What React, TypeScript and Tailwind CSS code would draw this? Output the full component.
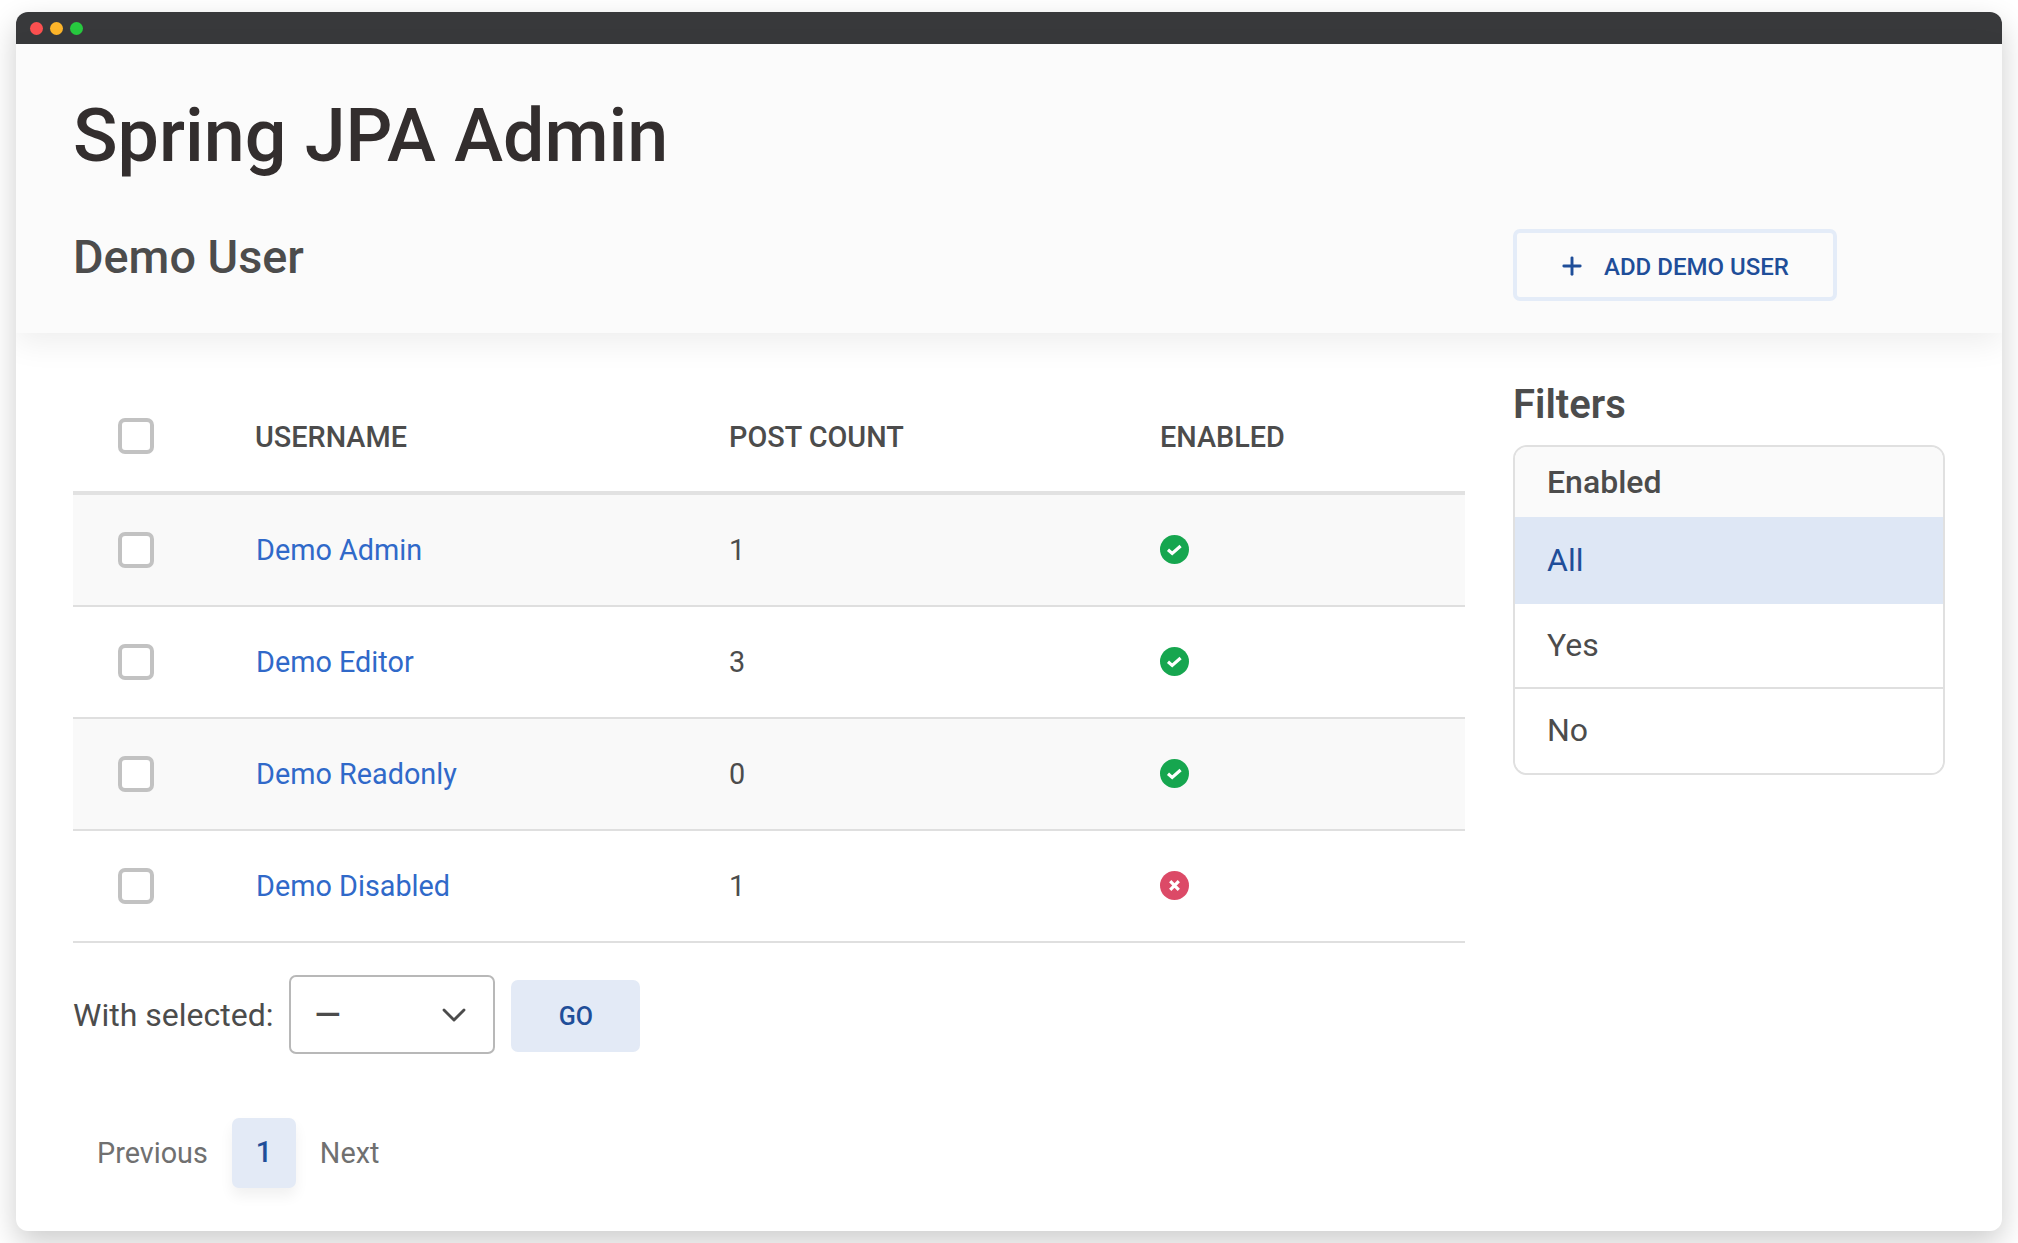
import { Plus, ChevronDown } from 'lucide-react';

const rows = [
  { name: 'Demo Admin', posts: 1, enabled: true },
  { name: 'Demo Editor', posts: 3, enabled: true },
  { name: 'Demo Readonly', posts: 0, enabled: true },
  { name: 'Demo Disabled', posts: 1, enabled: false },
];

function Checkbox() {
  return <span className="block h-[36px] w-[36px] rounded-[7px] border-[4px] border-[#c2c2c2] bg-white" />;
}

function StatusIcon({ on }: { on: boolean }) {
  return (
    <svg className="mb-[2px]" width="29" height="29" viewBox="0 0 29 29">
      <circle cx="14.5" cy="14.5" r="14.5" fill={on ? '#16a64f' : '#dc4a67'} />
      {on ? (
        <path d="M8 14.8l4.2 3.6 8.4-7.4" fill="none" stroke="#fff" strokeWidth="3.2" />
      ) : (
        <path d="M10.2 10.2l8.6 8.6M18.8 10.2l-8.6 8.6" fill="none" stroke="#fff" strokeWidth="3.2" />
      )}
    </svg>
  );
}

export default function App() {
  return (
    <div className="min-h-[1243px] bg-white pt-[12px] pl-[16px] pr-[16px] font-['Roboto',sans-serif] text-[#4c4c4c]">
      <div className="h-[1219px] w-[1986px] overflow-hidden rounded-[12px] bg-white shadow-[0_12px_30px_rgba(0,0,0,0.2)]">
        {/* title bar */}
        <div className="flex h-[32px] items-center gap-[7px] bg-[#38393b] pl-[14px]">
          <span className="h-[13px] w-[13px] rounded-full bg-[#fc5050]" />
          <span className="h-[13px] w-[13px] rounded-full bg-[#fdb52a]" />
          <span className="h-[13px] w-[13px] rounded-full bg-[#27c93f]" />
        </div>

        {/* header */}
        <header className="relative h-[289px] bg-[#fbfbfb] pl-[57px] shadow-[0_10px_30px_rgba(0,0,0,0.07)]">
          <h1 className="pt-[46px] text-[73.6px] leading-[92px] font-medium text-[#332e2e]">Spring JPA Admin</h1>
          <div className="mt-[47px] flex items-start justify-between pr-[165px]">
            <h2 className="text-[46.8px] leading-[56px] font-medium">Demo User</h2>
            <button className="flex h-[72px] w-[324px] items-center gap-[18px] rounded-[7px] border-[4px] border-[#e4ecf8] pt-[4px] pl-[41px] text-[24px] font-medium text-[#1f4e99]">
              <Plus className="-mt-[2px]" size={28} strokeWidth={2.5} />
              ADD DEMO USER
            </button>
          </div>
        </header>

        <main className="flex items-start pt-[47px] pl-[57px]">
          <div className="w-[1392px]">
            {/* table */}
            <div className="grid h-[115px] grid-cols-[45px_36px_1fr] items-center border-b-[4px] border-[#e2e2e2] text-[28.8px] font-medium">
              <span />
              <Checkbox />
              <div className="grid grid-cols-[474px_431px_1fr] pt-[4px] pl-[101px]">
                <span>USERNAME</span>
                <span>POST COUNT</span>
                <span>ENABLED</span>
              </div>
            </div>
            {rows.map((r, i) => (
              <div
                key={r.name}
                className={`grid h-[112px] grid-cols-[45px_36px_1fr] items-center border-b-[2px] border-[#dfdfdf] text-[28.8px] ${i % 2 === 0 ? 'bg-[#f9f9f9]' : 'bg-white'}`}
              >
                <span />
                <Checkbox />
                <div className="grid grid-cols-[473px_431px_1fr] items-center pl-[102px]">
                  <span className="pt-[2px] text-[#3069c9]">{r.name}</span>
                  <span className="pt-[2px]">{r.posts}</span>
                  <StatusIcon on={r.enabled} />
                </div>
              </div>
            ))}

            {/* bulk actions */}
            <div className="mt-[32px] flex items-center text-[32px]">
              <span>With selected:</span>
              <div className="ml-[16px] flex h-[79px] w-[206px] items-center justify-between rounded-[7px] border-[2px] border-[#b8b8b8] pr-[19px] pl-[23px]">
                <span className="text-[34px] font-medium">—</span>
                <ChevronDown size={40} strokeWidth={1.7} />
              </div>
              <button className="mt-[2px] ml-[16px] h-[72px] w-[129px] rounded-[7px] bg-[#e3eaf6] pt-[3px] text-[25px] font-medium text-[#1f4e99]">GO</button>
            </div>

            {/* pagination */}
            <div className="mt-[64px] flex items-center pl-[24px] text-[28.8px] text-[#707070]">
              <span className="pt-[2px]">Previous</span>
              <span className="mx-[24px] flex h-[70px] w-[64px] items-center justify-center rounded-[7px] bg-[#e3eaf6] font-medium text-[#1f4e99] shadow-[0_8px_14px_rgba(0,0,0,0.06)]">1</span>
              <span className="pt-[2px]">Next</span>
            </div>
          </div>

          {/* filters */}
          <aside className="ml-[48px] w-[432px]">
            <h3 className="text-[40px] leading-[50px] font-semibold">Filters</h3>
            <div className="mt-[15px] overflow-hidden rounded-[14px] border-[2px] border-[#e0e0e0] text-[32px]">
              <div className="flex h-[70px] items-center bg-[#fafafa] pl-[32px] font-medium">Enabled</div>
              <div className="flex h-[87px] items-center bg-[#dee7f5] pb-[2px] pl-[32px] text-[#1f4e99]">All</div>
              <div className="flex h-[85px] items-center border-b-[2px] border-[#dfdfdf] bg-white pb-[2px] pl-[32px]">Yes</div>
              <div className="flex h-[84px] items-center bg-white pb-[2px] pl-[32px]">No</div>
            </div>
          </aside>
        </main>
      </div>
    </div>
  );
}
